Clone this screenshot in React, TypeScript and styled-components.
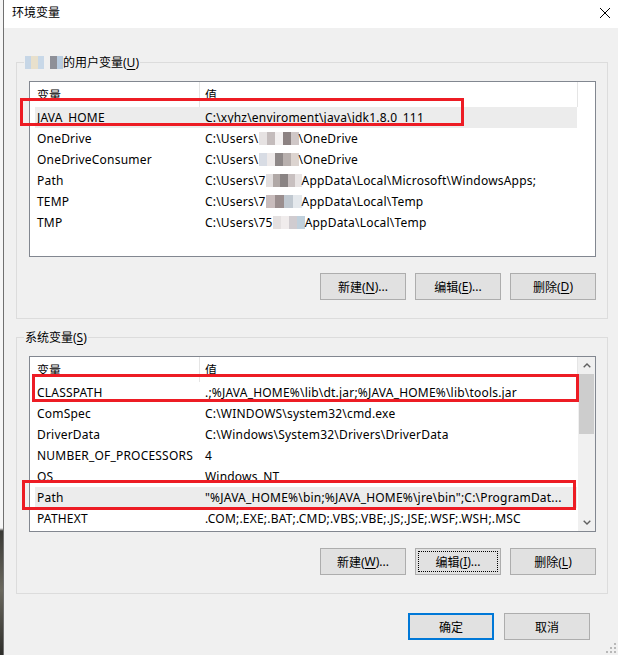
import React from "react";
import styled, { createGlobalStyle, css } from "styled-components";

const GlobalStyle = createGlobalStyle`
  html, body { margin: 0; padding: 0; background: #ffffff; }
  body {
    font-family: "Noto Sans", "Noto Sans CJK SC", sans-serif;
    font-size: 12px;
    color: #000;
  }
  * { box-sizing: border-box; }
`;

const Screen = styled.div`
  display: flex;
  width: 618px;
  height: 655px;
  overflow: hidden;
`;

const Backdrop = styled.div`
  width: 3px;
  flex: none;
  background: linear-gradient(
    180deg,
    #f6f6f6 0,
    #f6f6f6 528px,
    #3a3a36 531px,
    #6a685e 590px,
    #2e2e2a 655px
  );
`;

const Window = styled.div`
  flex: 1;
  display: flex;
  flex-direction: column;
  border-left: 1px solid #707070;
  position: relative;
  background: #f0f0f0;
`;

const TitleBar = styled.div`
  height: 28px;
  flex: none;
  background: #ffffff;
  display: flex;
  align-items: center;
  justify-content: space-between;
  padding: 0 8px 2px 8px;
`;

const TitleText = styled.span`
  font-size: 12px;
  line-height: 16px;
`;

const CloseIcon = styled.svg`
  width: 10px;
  height: 10px;
  display: block;
`;

const Body = styled.div`
  flex: 1;
  padding: 34px 10px 0 12px;
  display: flex;
  flex-direction: column;
`;

const Group = styled.section`
  position: relative;
  border: 1px solid #dcdcdc;
  padding: 18px 11px 18px 12px;
  & + & {
    margin-top: 18px;
  }
`;

const Legend = styled.div`
  position: absolute;
  top: -9px;
  left: 7px;
  padding: 0 1px;
  background: #f0f0f0;
  line-height: 17px;
  display: flex;
  align-items: center;
  white-space: nowrap;
`;

const Accel = styled.u`
  text-decoration: underline;
  text-underline-offset: 2px;
`;

const Mosaic = styled.span<{ $w: number; $colors: string[] }>`
  display: inline-block;
  width: ${(p) => p.$w}px;
  height: 13px;
  vertical-align: middle;
  background: ${(p) =>
    `linear-gradient(90deg, ${p.$colors
      .map(
        (c, i, a) =>
          `${c} ${(i * 100) / a.length}% ${((i + 1) * 100) / a.length}%`
      )
      .join(", ")})`};
`;

const ListBox = styled.div`
  height: 176px;
  border: 1px solid #828790;
  background: #ffffff;
  display: flex;
`;

const ListContent = styled.div`
  flex: 1;
  padding-left: 5px;
  position: relative;
`;

const columns = css`
  display: grid;
  grid-template-columns: 164px 378px;
`;

const HeaderRow = styled.div`
  ${columns};
  width: 543px;
  height: 25px;
  border-right: 1px solid #e5e5e5;
`;

const HeaderCell = styled.div<{ $value?: boolean }>`
  display: flex;
  align-items: center;
  padding-left: ${(p) => (p.$value ? 5 : 2)}px;
  ${(p) =>
    p.$value &&
    css`
      border-left: 1px solid #e5e5e5;
    `}
`;

const Row = styled.div<{ $selected?: boolean }>`
  ${columns};
  width: 542px;
  height: 21px;
  align-items: center;
  position: relative;
  background: ${(p) => (p.$selected ? "#ececec" : "transparent")};
  white-space: nowrap;
  letter-spacing: 0.2px;
`;

const Cell = styled.div<{ $value?: boolean }>`
  padding-left: ${(p) => (p.$value ? 6 : 2)}px;
  display: flex;
  align-items: center;
  line-height: 21px;
`;

const RedMark = styled.div<{
  $left: number;
  $top: number;
  $width: number;
  $height: number;
}>`
  position: absolute;
  left: ${(p) => p.$left}px;
  top: ${(p) => p.$top}px;
  width: ${(p) => p.$width}px;
  height: ${(p) => p.$height}px;
  border: 3px solid #ed1c24;
  pointer-events: none;
`;

const ScrollBar = styled.div`
  width: 17px;
  flex: none;
  display: flex;
  flex-direction: column;
  background: #f0f0f0;
`;

const ScrollArrow = styled.div`
  height: 17px;
  flex: none;
  display: flex;
  align-items: center;
  justify-content: center;
`;

const ScrollTrack = styled.div`
  flex: 1;
  padding: 0 1px;
`;

const ScrollThumb = styled.div`
  height: 60px;
  background: #cdcdcd;
`;

const ButtonRow = styled.div`
  display: flex;
  justify-content: flex-end;
  gap: 9px;
  margin-top: 16px;
`;

const Button = styled.button<{ $default?: boolean; $focused?: boolean }>`
  width: 86px;
  height: 27px;
  padding: 0;
  background: #e1e1e1;
  border: 1px solid #adadad;
  font: inherit;
  font-size: 12px;
  color: #000;
  display: flex;
  align-items: center;
  justify-content: center;
  ${(p) =>
    p.$default &&
    css`
      border: 2px solid #0078d7;
    `}
  ${(p) =>
    p.$focused &&
    css`
      outline: 1px dotted #000;
      outline-offset: -4px;
    `}
`;

const Footer = styled.div`
  display: flex;
  justify-content: flex-end;
  gap: 10px;
  margin-top: 19px;
  padding-right: 18px;
`;

const Grip = styled.svg`
  position: absolute;
  right: 1px;
  bottom: 1px;
  width: 11px;
  height: 11px;
`;

type Mark = { left: number; top: number; width: number; height: number };
type VarRow = {
  name: string;
  value: React.ReactNode;
  selected?: boolean;
  mark?: Mark;
};

const mA = ["#e6e2e2", "#c4bcbc", "#f3f0f0", "#8c8282", "#cfc7c7"];
const mB = ["#d8dce4", "#eeeaea", "#8e8888", "#b8b0ae", "#dcd4d0"];
const mC = ["#e2dede", "#b0a8a6", "#8a8484", "#c8c0c0", "#e8e4e4"];
const mD = ["#c8bcbc", "#9a8e8e", "#c0c8d0", "#e4e8ec"];
const mE = ["#e4e0e0", "#f0ecec", "#d0ccd0", "#c0d0dc"];

const userRows: VarRow[] = [
  {
    name: "JAVA_HOME",
    value: "C:\\xyhz\\enviroment\\java\\jdk1.8.0_111",
    selected: true,
    mark: { left: -15, top: -9, width: 444, height: 28 },
  },
  {
    name: "OneDrive",
    value: (
      <>
        C:\Users\<Mosaic $w={40} $colors={mA} />\OneDrive
      </>
    ),
  },
  {
    name: "OneDriveConsumer",
    value: (
      <>
        C:\Users\<Mosaic $w={40} $colors={mB} />\OneDrive
      </>
    ),
  },
  {
    name: "Path",
    value: (
      <>
        C:\Users\7<Mosaic $w={36} $colors={mC} />AppData\Local\Microsoft\WindowsApps;
      </>
    ),
  },
  {
    name: "TEMP",
    value: (
      <>
        C:\Users\7<Mosaic $w={36} $colors={mD} />AppData\Local\Temp
      </>
    ),
  },
  {
    name: "TMP",
    value: (
      <>
        C:\Users\75<Mosaic $w={32} $colors={mE} />AppData\Local\Temp
      </>
    ),
  },
];

const systemRows: VarRow[] = [
  {
    name: "CLASSPATH",
    value: ".;%JAVA_HOME%\\lib\\dt.jar;%JAVA_HOME%\\lib\\tools.jar",
    mark: { left: -3, top: -8, width: 547, height: 28 },
  },
  { name: "ComSpec", value: "C:\\WINDOWS\\system32\\cmd.exe" },
  { name: "DriverData", value: "C:\\Windows\\System32\\Drivers\\DriverData" },
  { name: "NUMBER_OF_PROCESSORS", value: "4" },
  { name: "OS", value: "Windows_NT" },
  {
    name: "Path",
    value: "\"%JAVA_HOME%\\bin;%JAVA_HOME%\\jre\\bin\";C:\\ProgramDat...",
    selected: true,
    mark: { left: -13, top: -7, width: 554, height: 30 },
  },
  {
    name: "PATHEXT",
    value: ".COM;.EXE;.BAT;.CMD;.VBS;.VBE;.JS;.JSE;.WSF;.WSH;.MSC",
  },
];

const Chevron: React.FC<{ up?: boolean }> = ({ up }) => (
  <svg width="8" height="5" viewBox="0 0 8 5">
    <polyline
      points={up ? "0.7,4.3 4,1 7.3,4.3" : "0.7,0.7 4,4 7.3,0.7"}
      fill="none"
      stroke="#606060"
      strokeWidth="1.4"
    />
  </svg>
);

const VarList: React.FC<{ rows: VarRow[]; scroll?: boolean }> = ({
  rows,
  scroll,
}) => (
  <ListBox>
    <ListContent>
      <HeaderRow>
        <HeaderCell>变量</HeaderCell>
        <HeaderCell $value>值</HeaderCell>
      </HeaderRow>
      {rows.map((r) => (
        <Row key={r.name} $selected={r.selected}>
          <Cell>{r.name}</Cell>
          <Cell $value>{r.value}</Cell>
          {r.mark && (
            <RedMark
              $left={r.mark.left}
              $top={r.mark.top}
              $width={r.mark.width}
              $height={r.mark.height}
            />
          )}
        </Row>
      ))}
    </ListContent>
    {scroll && (
      <ScrollBar>
        <ScrollArrow>
          <Chevron up />
        </ScrollArrow>
        <ScrollTrack>
          <ScrollThumb />
        </ScrollTrack>
        <ScrollArrow>
          <Chevron />
        </ScrollArrow>
      </ScrollBar>
    )}
  </ListBox>
);

export default function App() {
  return (
    <>
      <GlobalStyle />
      <Screen>
        <Backdrop />
        <Window>
          <TitleBar>
            <TitleText>环境变量</TitleText>
            <CloseIcon viewBox="0 0 10 10">
              <path d="M0 0 L10 10 M10 0 L0 10" stroke="#000" strokeWidth="1" />
            </CloseIcon>
          </TitleBar>
          <Body>
            <Group>
              <Legend>
                <Mosaic
                  $w={38}
                  $colors={[
                    "#c6d6e6",
                    "#e8e0cc",
                    "#c8d8e8",
                    "#f0f0f0",
                    "#8e9098",
                    "#b8cce0",
                  ]}
                />
                的用户变量(<Accel>U</Accel>)
              </Legend>
              <VarList rows={userRows} />
              <ButtonRow>
                <Button>
                  新建(<Accel>N</Accel>)...
                </Button>
                <Button>
                  编辑(<Accel>E</Accel>)...
                </Button>
                <Button>
                  删除(<Accel>D</Accel>)
                </Button>
              </ButtonRow>
            </Group>
            <Group>
              <Legend>
                系统变量(<Accel>S</Accel>)
              </Legend>
              <VarList rows={systemRows} scroll />
              <ButtonRow>
                <Button>
                  新建(<Accel>W</Accel>)...
                </Button>
                <Button $focused>
                  编辑(<Accel>I</Accel>)...
                </Button>
                <Button>
                  删除(<Accel>L</Accel>)
                </Button>
              </ButtonRow>
            </Group>
            <Footer>
              <Button $default>确定</Button>
              <Button>取消</Button>
            </Footer>
          </Body>
          <Grip viewBox="0 0 11 11">
            <g fill="#b8b8b8">
              <rect x="8" y="0" width="2" height="2" />
              <rect x="4" y="4" width="2" height="2" />
              <rect x="8" y="4" width="2" height="2" />
              <rect x="0" y="8" width="2" height="2" />
              <rect x="4" y="8" width="2" height="2" />
              <rect x="8" y="8" width="2" height="2" />
            </g>
          </Grip>
        </Window>
      </Screen>
    </>
  );
}
